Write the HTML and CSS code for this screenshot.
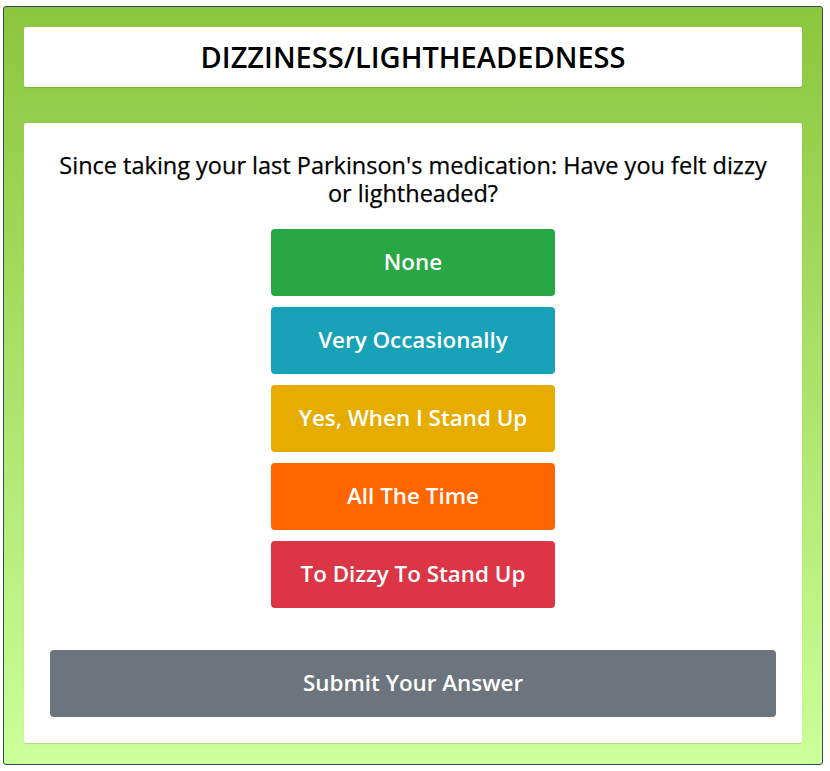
FILE: index.html
```html
<!DOCTYPE html>
<html lang="en">
<head>
<meta charset="utf-8">
<title>Dizziness/Lightheadedness</title>
<link rel="stylesheet" href="styles.css">
</head>
<body>
<div class="frame">
  <div class="header"><h1 class="title">DIZZINESS/LIGHTHEADEDNESS</h1></div>
  <div class="card">
    <p class="question">Since taking your last Parkinson's medication: Have you felt dizzy or lightheaded?</p>
    <div class="options">
      <button class="opt opt-green">None</button>
      <button class="opt opt-teal">Very Occasionally</button>
      <button class="opt opt-yellow">Yes, When I Stand Up</button>
      <button class="opt opt-orange">All The Time</button>
      <button class="opt opt-red">To Dizzy To Stand Up</button>
    </div>
    <button class="submit">Submit Your Answer</button>
  </div>
</div>
</body>
</html>
```

FILE: styles.css
```css
html, body {
  margin: 0;
  padding: 0;
  background: #ffffff;
}
body {
  padding: 6px 7px 6px 3px;
  font-family: "Open Sans", "Noto Sans", sans-serif;
}
.frame {
  border: 1px solid #2d4a66;
  border-radius: 3px;
  background: linear-gradient(to bottom, #8cc63d 0%, #ccff99 100%);
  padding: 20px 20px 21px 20px;
  height: 759px;
  box-sizing: border-box;
  display: flex;
  flex-direction: column;
}
.header {
  background: #ffffff;
  height: 60px;
  flex: 0 0 60px;
  border-radius: 2px;
  box-shadow: 0 1px 1px rgba(0,0,0,0.15);
  display: flex;
  align-items: center;
  justify-content: center;
}
.title {
  margin: 0 0 2px 0;
  font-size: 29px;
  font-weight: 600;
  color: #000;
  letter-spacing: 0;
}
.card {
  margin-top: 36px;
  flex: 1 1 auto;
  background: #ffffff;
  border-radius: 2px;
  box-shadow: 0 1px 1px rgba(0,0,0,0.15);
  padding: 28px 26px 26px 26px;
  display: flex;
  flex-direction: column;
  align-items: center;
}
.question {
  margin: 0;
  font-size: 23.5px;
  line-height: 28px;
  font-weight: 500;
  color: #000;
  text-align: center;
  max-width: 720px;
  -webkit-text-stroke: 0.25px #000;
}
.options {
  margin-top: 22px;
  display: flex;
  flex-direction: column;
  gap: 11px;
}
.opt, .submit {
  border: none;
  border-radius: 4px;
  color: #fff;
  font-family: "Open Sans", "Noto Sans", sans-serif;
  font-weight: 600;
  font-size: 22.4px;
  height: 67px;
  padding: 0 0 3px 0;
  cursor: pointer;
}
.opt {
  width: 284px;
}
.opt-green { background: #28a745; }
.opt-teal { background: #17a2b8; }
.opt-yellow { background: #e6ac00; }
.opt-orange { background: #ff6600; }
.opt-red { background: #dc3545; }
.submit {
  margin-top: 42px;
  width: 100%;
  background: #6c757d;
}
```
